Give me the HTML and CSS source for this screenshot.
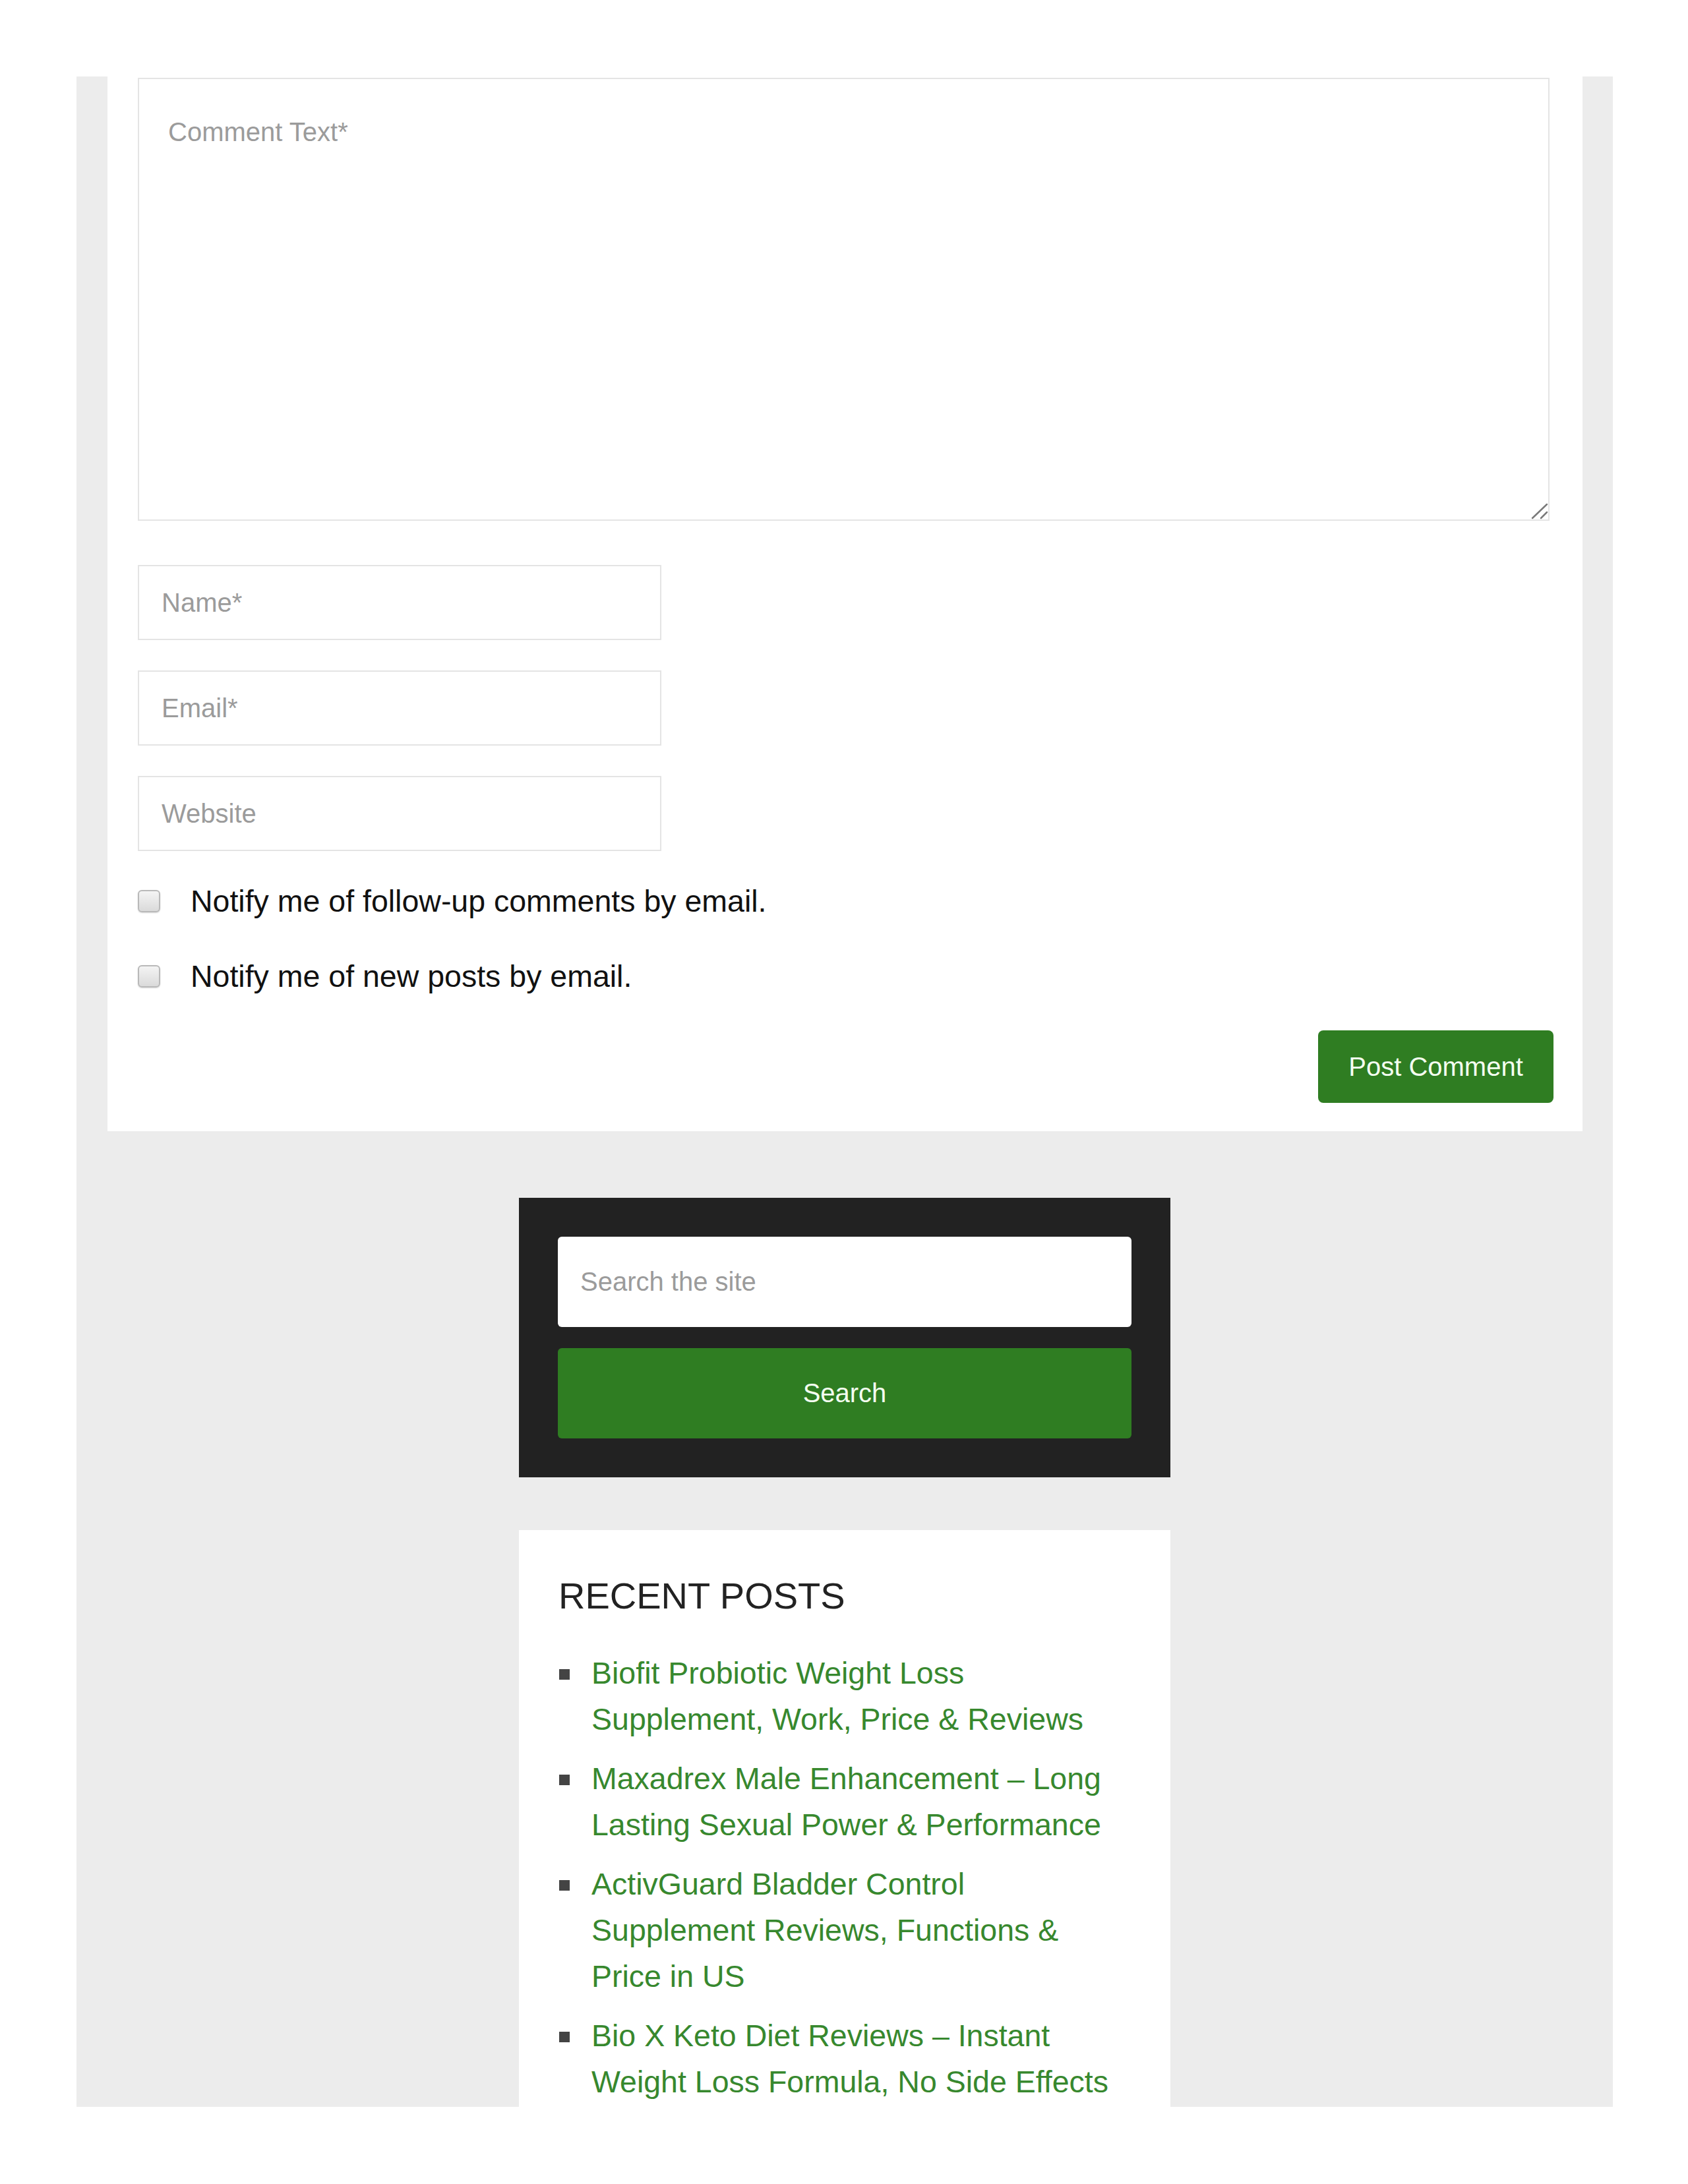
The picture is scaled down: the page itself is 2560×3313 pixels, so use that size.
FILE: index.html
```html
<!DOCTYPE html>
<html>
<head>
    <meta charset="UTF-8">
    <title>Leave a Comment</title>
    <link rel="stylesheet" href="styles.css">
</head>
<body>
    <div class="site">
        <div class="comment-card">
            <form class="comment-form" onsubmit="return false;">
                <div class="textarea-wrap">
                    <textarea class="comment-text" placeholder="Comment Text*"></textarea>
                    <svg class="grip" width="26" height="26" viewBox="0 0 26 26">
                        <line x1="2" y1="24" x2="24" y2="3" stroke="#7a7a7a" stroke-width="2.5" stroke-linecap="round"/>
                        <line x1="15" y1="24" x2="24" y2="15" stroke="#7a7a7a" stroke-width="2.5" stroke-linecap="round"/>
                    </svg>
                </div>

                <input class="field" type="text" placeholder="Name*">
                <input class="field" type="email" placeholder="Email*">
                <input class="field" type="url" placeholder="Website">

                <label class="notify">
                    <input type="checkbox" class="check">
                    <span>Notify me of follow-up comments by email.</span>
                </label>
                <label class="notify">
                    <input type="checkbox" class="check">
                    <span>Notify me of new posts by email.</span>
                </label>

                <div class="submit-row">
                    <button class="btn-green post-btn" type="submit">Post Comment</button>
                </div>
            </form>
        </div>

        <div class="search-widget">
            <input class="search-input" type="search" placeholder="Search the site">
            <button class="btn-green search-btn" type="button">Search</button>
        </div>

        <div class="recent-widget">
            <h2>RECENT POSTS</h2>
            <ul class="recent-list">
                <li><a href="#">Biofit Probiotic Weight Loss Supplement, Work, Price &amp; Reviews</a></li>
                <li><a href="#">Maxadrex Male Enhancement – Long Lasting Sexual Power &amp; Performance</a></li>
                <li><a href="#">ActivGuard Bladder Control Supplement Reviews, Functions &amp; Price in US</a></li>
                <li><a href="#">Bio X Keto Diet Reviews – Instant Weight Loss Formula, No Side Effects</a></li>
            </ul>
        </div>
    </div>
</body>
</html>
```

FILE: styles.css
```css
* {
    margin: 0;
    padding: 0;
    box-sizing: border-box;
}

body {
    font-family: 'Liberation Sans', Arial, Helvetica, sans-serif;
    background: #ffffff;
    color: #111111;
}

.site {
    margin: 116px 114px 0 116px;
    width: 2330px;
    height: 3080px;
    background: #ececec;
    overflow: hidden;
}

/* comment form card */
.comment-card {
    margin: 0 46px 0 47px;
    background: #ffffff;
    padding: 2px 44px 43px 46px;
}

.comment-form {
    display: flex;
    flex-direction: column;
}

.textarea-wrap {
    position: relative;
    margin-right: 6px;
}

.comment-text {
    display: block;
    width: 100%;
    height: 672px;
    border: 2px solid #e4e4e4;
    padding: 56px 44px;
    font-family: inherit;
    font-size: 40px;
    line-height: 48px;
    resize: none;
    outline: none;
}

.grip {
    position: absolute;
    right: 2px;
    bottom: 2px;
}

.field {
    display: block;
    width: 794px;
    height: 114px;
    margin-top: 46px;
    border: 2px solid #e4e4e4;
    padding: 0 34px;
    font-family: inherit;
    font-size: 40px;
    color: #333;
    outline: none;
}

.field:first-of-type {
    margin-top: 67px;
}

textarea::placeholder,
input::placeholder {
    color: #9b9b9b;
}

.notify {
    display: flex;
    align-items: center;
    height: 70px;
    font-size: 46.5px;
    line-height: 70px;
    color: #111;
}

.notify:first-of-type {
    margin-top: 41px;
}

.notify + .notify {
    margin-top: 44px;
}

.check {
    appearance: none;
    -webkit-appearance: none;
    flex: none;
    width: 34px;
    height: 34px;
    margin: 0 46px 0 0;
    border: 2px solid #b9b9b9;
    border-radius: 6px;
    background: linear-gradient(#f4f4f4, #dadada);
    box-shadow: 0 1px 2px rgba(0, 0, 0, 0.15);
}

.submit-row {
    display: flex;
    justify-content: flex-end;
    margin-top: 47px;
}

.btn-green {
    background: #2f7d22;
    color: #f4fff0;
    border: none;
    font-family: inherit;
    font-size: 40px;
    cursor: pointer;
}

.post-btn {
    height: 110px;
    width: 357px;
    border-radius: 8px;
}

/* search widget */
.search-widget {
    width: 988px;
    margin: 101px auto 0;
    background: #222222;
    padding: 59px;
    display: flex;
    flex-direction: column;
    gap: 32px;
}

.search-input {
    height: 137px;
    border: none;
    border-radius: 6px;
    padding: 0 34px;
    font-family: inherit;
    font-size: 40px;
    outline: none;
    background: #ffffff;
}

.search-btn {
    height: 137px;
    border-radius: 6px;
}

/* recent posts */
.recent-widget {
    width: 988px;
    margin: 80px auto 0;
    background: #ffffff;
    padding: 66px 60px 60px 60px;
}

.recent-widget h2 {
    font-size: 56px;
    line-height: 67px;
    font-weight: normal;
    color: #222;
}

.recent-list {
    list-style: none;
    margin-top: 49px;
    padding-right: 20px;
}

.recent-list li {
    display: flex;
    font-size: 46.5px;
    line-height: 70px;
    margin-bottom: 20px;
}

.recent-list li::before {
    content: "";
    flex: none;
    width: 16px;
    height: 16px;
    margin: 29px 33px 0 1px;
    background: #444;
}

.recent-list a {
    color: #37882e;
    text-decoration: none;
}
```
